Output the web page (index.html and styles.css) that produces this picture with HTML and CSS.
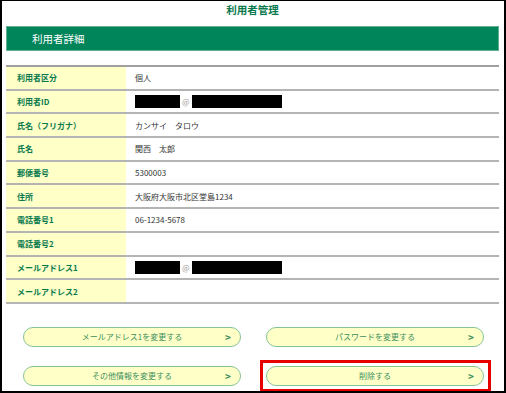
FILE: index.html
```html
<!DOCTYPE html>
<html lang="ja">
<head>
    <meta charset="UTF-8">
    <meta name="viewport" content="width=device-width, initial-scale=1.0">
    <title>利用者管理</title>
    <link rel="stylesheet" href="styles.css">
</head>
<body>
    <div class="frame">
        <h1 class="page-title">利用者管理</h1>

        <div class="bar">利用者詳細</div>

        <!-- User details -->
        <div class="detail">
            <div class="row"><div class="label">利用者区分</div><div class="value">個人</div></div>
            <div class="row"><div class="label">利用者ID</div><div class="value"><span class="mask short"></span><span class="at">@</span><span class="mask long"></span></div></div>
            <div class="row"><div class="label">氏名（フリガナ）</div><div class="value">カンサイ　タロウ</div></div>
            <div class="row"><div class="label">氏名</div><div class="value">関西　太郎</div></div>
            <div class="row"><div class="label">郵便番号</div><div class="value">5300003</div></div>
            <div class="row"><div class="label">住所</div><div class="value">大阪府大阪市北区堂島1234</div></div>
            <div class="row"><div class="label">電話番号1</div><div class="value">06-1234-5678</div></div>
            <div class="row"><div class="label">電話番号2</div><div class="value"></div></div>
            <div class="row"><div class="label">メールアドレス1</div><div class="value"><span class="mask short"></span><span class="at">@</span><span class="mask long"></span></div></div>
            <div class="row"><div class="label">メールアドレス2</div><div class="value"></div></div>
        </div>

        <!-- Actions -->
        <div class="actions">
            <div class="slot"><button class="btn">メールアドレス1を変更する<span class="arrow">&gt;</span></button></div>
            <div class="slot"><button class="btn">パスワードを変更する<span class="arrow">&gt;</span></button></div>
            <div class="slot"><button class="btn">その他情報を変更する<span class="arrow">&gt;</span></button></div>
            <div class="slot marked"><button class="btn">削除する<span class="arrow">&gt;</span></button></div>
        </div>
    </div>
</body>
</html>
```

FILE: styles.css
```css
* {
    margin: 0;
    padding: 0;
    box-sizing: border-box;
}

body {
    font-family: "Noto Sans CJK JP", "Noto Sans", sans-serif;
    background-color: #fff;
    color: #333;
}

/* Outer frame */
.frame {
    width: 506px;
    height: 393px;
    border: 2px solid #000;
    border-top-width: 1px;
    padding: 0 5px 0 4px;
    overflow: hidden;
}

.page-title {
    font-size: 10.5px;
    font-weight: bold;
    color: #0a7a4e;
    text-align: center;
    height: 25px;
    line-height: 18px;
}

/* Section header bar */
.bar {
    background-color: #00845a;
    border: 1px solid #5fb08f;
    color: #fff;
    font-size: 10.5px;
    height: 25px;
    line-height: 23px;
    padding-left: 25px;
    margin-bottom: 14px;
}

/* Details list */
.detail {
    border-top: 2px solid #a0a0a0;
    font-size: 8px;
}

.row {
    display: flex;
    height: 23.7px;
    border-bottom: 2px solid #b4b4b4;
}

.label {
    width: 120px;
    flex-shrink: 0;
    display: flex;
    align-items: center;
    background-color: #ffffc8;
    color: #0a7a4e;
    font-weight: bold;
    padding-left: 11px;
}

.value {
    flex: 1;
    display: flex;
    align-items: center;
    padding-left: 9px;
    color: #333;
}

.mask {
    display: inline-block;
    height: 13px;
    background-color: #000;
}

.mask.short {
    width: 45px;
}

.mask.long {
    width: 90px;
}

.at {
    color: #999;
    font-size: 8px;
    margin: 0 2px;
}

/* Buttons */
.actions {
    display: grid;
    grid-template-columns: 1fr 1fr;
    column-gap: 12px;
    row-gap: 7px;
    padding: 17px 8px 0 11px;
}

.slot {
    padding: 3px 4px 3px 3px;
    border: 3px solid transparent;
}

.slot.marked {
    border-color: #e60000;
}

.btn {
    display: block;
    position: relative;
    width: 100%;
    height: 20px;
    border: 1px solid #86c497;
    border-radius: 10px;
    background-color: #ffffc8;
    color: #3c8f5c;
    font-family: inherit;
    font-size: 8px;
    cursor: pointer;
}

.arrow {
    position: absolute;
    right: 9px;
    top: 50%;
    transform: translateY(-50%);
    font-size: 10px;
    line-height: 1;
    font-weight: bold;
}
```
